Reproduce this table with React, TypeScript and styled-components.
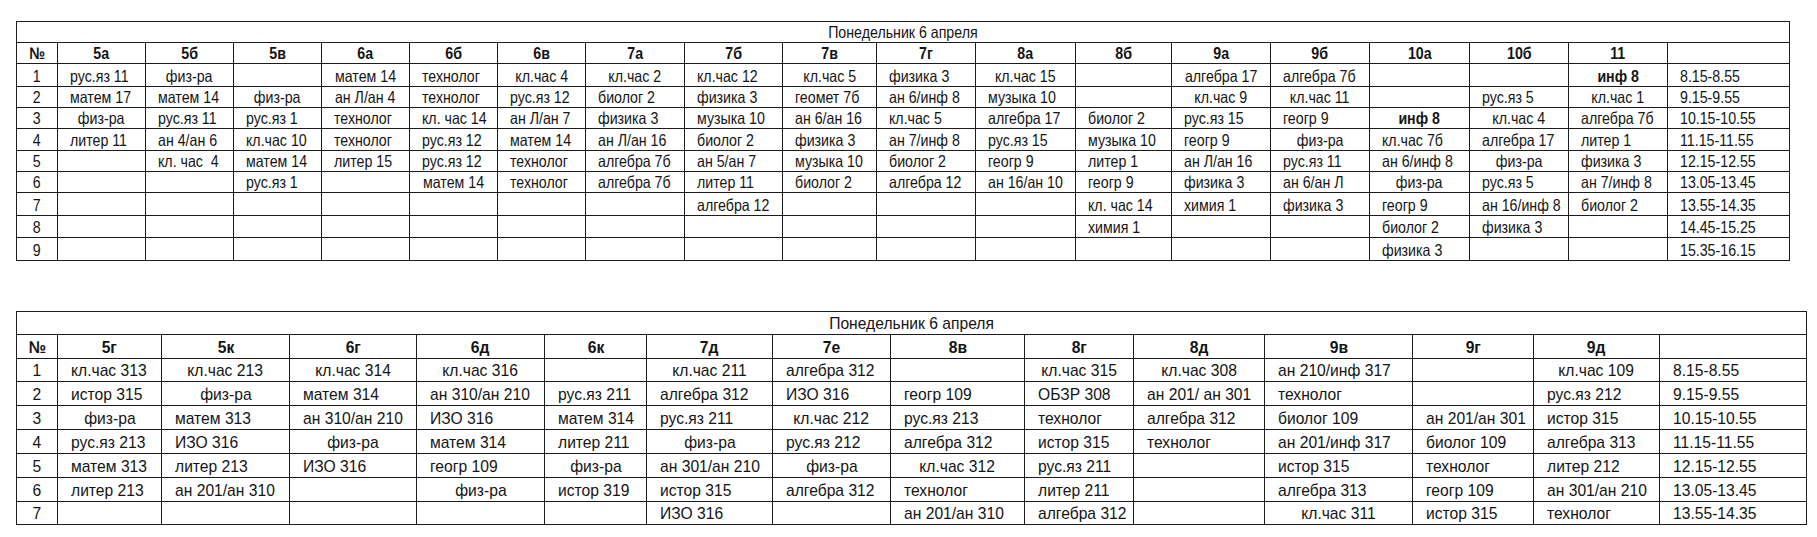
import React from 'react';
import styled, { createGlobalStyle } from 'styled-components';

type Align = 'l' | 'c';

interface SheetSpec {
  classes: string[];
  widths: number[];
  rows: string[][];
  rowHeights: number[];
  titleH: number;
  headH: number;
  font: number;
  scale: number;
  pad: number;
}

const TITLE = 'Понедельник 6 апреля';

const upper: SheetSpec = {
  classes: ['5а', '5б', '5в', '6а', '6б', '6в', '7а', '7б', '7в', '7г', '8а', '8б', '9а', '9б', '10а', '10б', '11'],
  widths: [41, 88, 88, 88, 88, 88, 88, 99, 98, 94, 99, 100, 96, 99, 99, 100, 99, 99, 122],
  rowHeights: [23, 21, 21, 22, 21, 21, 23, 22, 23],
  titleH: 21,
  headH: 21,
  font: 16.5,
  scale: 0.86,
  pad: 12,
  rows: [
    ['l|рус.яз 11', 'c|физ-ра', '', 'c|матем 14', 'l|технолог', 'c|кл.час 4', 'c|кл.час 2', 'l|кл.час 12', 'c|кл.час 5', 'l|физика 3', 'c|кл.час 15', '', 'c|алгебра 17', 'l|алгебра 7б', '', '', 'b|инф 8', 'l|8.15-8.55'],
    ['l|матем 17', 'l|матем 14', 'c|физ-ра', 'c|ан Л/ан 4', 'l|технолог', 'l|рус.яз 12', 'l|биолог 2', 'l|физика 3', 'l|геомет 7б', 'l|ан 6/инф 8', 'l|музыка 10', '', 'c|кл.час 9', 'c|кл.час 11', '', 'l|рус.яз 5', 'c|кл.час 1', 'l|9.15-9.55'],
    ['c|физ-ра', 'l|рус.яз 11', 'l|рус.яз 1', 'l|технолог', 'l|кл. час 14', 'l|ан Л/ан 7', 'l|физика 3', 'l|музыка 10', 'l|ан 6/ан 16', 'l|кл.час 5', 'l|алгебра 17', 'l|биолог 2', 'l|рус.яз 15', 'l|геогр 9', 'b|инф 8', 'c|кл.час 4', 'l|алгебра 7б', 'l|10.15-10.55'],
    ['l|литер 11', 'l|ан 4/ан 6', 'l|кл.час 10', 'l|технолог', 'l|рус.яз 12', 'l|матем 14', 'l|ан Л/ан 16', 'l|биолог 2', 'l|физика 3', 'l|ан 7/инф 8', 'l|рус.яз 15', 'l|музыка 10', 'l|геогр 9', 'c|физ-ра', 'l|кл.час 7б', 'l|алгебра 17', 'l|литер 1', 'l|11.15-11.55'],
    ['', 'l|кл. час  4', 'l|матем 14', 'l|литер 15', 'l|рус.яз 12', 'l|технолог', 'l|алгебра 7б', 'l|ан 5/ан 7', 'l|музыка 10', 'l|биолог 2', 'l|геогр 9', 'l|литер 1', 'l|ан Л/ан 16', 'l|рус.яз 11', 'l|ан 6/инф 8', 'c|физ-ра', 'l|физика 3', 'l|12.15-12.55'],
    ['', '', 'l|рус.яз 1', '', 'c|матем 14', 'l|технолог', 'l|алгебра 7б', 'l|литер 11', 'l|биолог 2', 'l|алгебра 12', 'l|ан 16/ан 10', 'l|геогр 9', 'l|физика 3', 'l|ан 6/ан Л', 'c|физ-ра', 'l|рус.яз 5', 'l|ан 7/инф 8', 'l|13.05-13.45'],
    ['', '', '', '', '', '', '', 'l|алгебра 12', '', '', '', 'l|кл. час 14', 'l|химия 1', 'l|физика 3', 'l|геогр 9', 'l|ан 16/инф 8', 'l|биолог 2', 'l|13.55-14.35'],
    ['', '', '', '', '', '', '', '', '', '', '', 'l|химия 1', '', '', 'l|биолог 2', 'l|физика 3', '', 'l|14.45-15.25'],
    ['', '', '', '', '', '', '', '', '', '', '', '', '', '', 'l|физика 3', '', '', 'l|15.35-16.15'],
  ],
};

const lower: SheetSpec = {
  classes: ['5г', '5к', '6г', '6д', '6к', '7д', '7е', '8в', '8г', '8д', '9в', '9г', '9д'],
  widths: [41, 104, 128, 127, 128, 102, 126, 118, 134, 109, 131, 148, 121, 126, 147],
  rowHeights: [23, 24, 24, 24, 24, 24, 23],
  titleH: 23,
  headH: 24,
  font: 17,
  scale: 0.92,
  pad: 13,
  rows: [
    ['l|кл.час 313', 'c|кл.час 213', 'c|кл.час 314', 'c|кл.час 316', '', 'c|кл.час 211', 'l|алгебра 312', '', 'c|кл.час 315', 'c|кл.час 308', 'l|ан 210/инф 317', '', 'c|кл.час 109', 'l|8.15-8.55'],
    ['l|истор 315', 'c|физ-ра', 'l|матем 314', 'l|ан 310/ан 210', 'l|рус.яз 211', 'l|алгебра 312', 'l|ИЗО 316', 'l|геогр 109', 'l|ОБЗР 308', 'l|ан 201/ ан 301', 'l|технолог', '', 'l|рус.яз 212', 'l|9.15-9.55'],
    ['c|физ-ра', 'l|матем 313', 'l|ан 310/ан 210', 'l|ИЗО 316', 'l|матем 314', 'l|рус.яз 211', 'c|кл.час 212', 'l|рус.яз 213', 'l|технолог', 'l|алгебра 312', 'l|биолог 109', 'l|ан 201/ан 301', 'l|истор 315', 'l|10.15-10.55'],
    ['l|рус.яз 213', 'l|ИЗО 316', 'c|физ-ра', 'l|матем 314', 'l|литер 211', 'c|физ-ра', 'l|рус.яз 212', 'l|алгебра 312', 'l|истор 315', 'l|технолог', 'l|ан 201/инф 317', 'l|биолог 109', 'l|алгебра 313', 'l|11.15-11.55'],
    ['l|матем 313', 'l|литер 213', 'l|ИЗО 316', 'l|геогр 109', 'c|физ-ра', 'l|ан 301/ан 210', 'c|физ-ра', 'c|кл.час 312', 'l|рус.яз 211', '', 'l|истор 315', 'l|технолог', 'l|литер 212', 'l|12.15-12.55'],
    ['l|литер 213', 'l|ан 201/ан 310', '', 'c|физ-ра', 'l|истор 319', 'l|истор 315', 'l|алгебра 312', 'l|технолог', 'l|литер 211', '', 'l|алгебра 313', 'l|геогр 109', 'l|ан 301/ан 210', 'l|13.05-13.45'],
    ['', '', '', '', '', 'l|ИЗО 316', '', 'l|ан 201/ан 310', 'l|алгебра 312', '', 'c|кл.час 311', 'l|истор 315', 'l|технолог', 'l|13.55-14.35'],
  ],
};

const GlobalStyle = createGlobalStyle`
  html, body {
    margin: 0;
    padding: 0;
    background: #ffffff;
  }
  body {
    font-family: "Liberation Sans", Arial, sans-serif;
    color: #141414;
  }
`;

const Page = styled.main`
  display: flex;
  flex-direction: column;
  align-items: flex-start;
  gap: 50px;
  padding: 21px 0 0 16px;
`;

const Sheet = styled.table<{ $font: number; $width: number }>`
  border-collapse: collapse;
  table-layout: fixed;
  width: ${p => p.$width}px;
  font-size: ${p => p.$font}px;
  line-height: 18px;
`;

const Col = styled.col<{ $w: number }>`
  width: ${p => p.$w}px;
`;

const Row = styled.tr<{ $h: number }>`
  height: ${p => p.$h}px;
`;

const Cell = styled.td`
  border: 1px solid #1c1c1c;
  padding: 0 0 1px;
  vertical-align: bottom;
  overflow: visible;
`;

const Content = styled.div<{ $align: Align; $pad: number }>`
  display: flex;
  justify-content: ${p => (p.$align === 'c' ? 'center' : 'flex-start')};
  padding-left: ${p => (p.$align === 'l' ? p.$pad : 0)}px;
  white-space: pre;
`;

const Label = styled.span<{ $scale: number; $align: Align; $bold?: boolean }>`
  display: inline-block;
  flex: none;
  transform: scaleX(${p => p.$scale});
  transform-origin: ${p => (p.$align === 'c' ? 'center' : 'left')} bottom;
  font-weight: ${p => (p.$bold ? 700 : 400)};
`;

function Text({ spec, text, align, bold }: { spec: SheetSpec; text: string; align: Align; bold?: boolean }) {
  return (
    <Content $align={align} $pad={spec.pad}>
      <Label $scale={spec.scale} $align={align} $bold={bold}>
        {text}
      </Label>
    </Content>
  );
}

function Entry({ spec, value }: { spec: SheetSpec; value: string }) {
  if (!value) return <Cell />;
  const [kind, text] = value.split('|');
  const align: Align = kind === 'l' ? 'l' : 'c';
  return (
    <Cell>
      <Text spec={spec} text={text} align={align} bold={kind === 'b'} />
    </Cell>
  );
}

function Timetable({ spec }: { spec: SheetSpec }) {
  const total = spec.widths.reduce((a, b) => a + b, 0);
  return (
    <Sheet $font={spec.font} $width={total}>
      <colgroup>
        {spec.widths.map((w, i) => (
          <Col key={i} $w={w} />
        ))}
      </colgroup>
      <tbody>
        <Row $h={spec.titleH}>
          <Cell colSpan={spec.widths.length}>
            <Text spec={spec} text={TITLE} align="c" />
          </Cell>
        </Row>
        <Row $h={spec.headH}>
          <Cell>
            <Text spec={spec} text="№" align="c" bold />
          </Cell>
          {spec.classes.map(c => (
            <Cell key={c}>
              <Text spec={spec} text={c} align="c" bold />
            </Cell>
          ))}
          <Cell />
        </Row>
        {spec.rows.map((row, r) => (
          <Row key={r} $h={spec.rowHeights[r]}>
            <Cell>
              <Text spec={spec} text={String(r + 1)} align="c" />
            </Cell>
            {row.map((v, i) => (
              <Entry key={i} spec={spec} value={v} />
            ))}
          </Row>
        ))}
      </tbody>
    </Sheet>
  );
}

export default function App() {
  return (
    <>
      <GlobalStyle />
      <Page>
        <Timetable spec={upper} />
        <Timetable spec={lower} />
      </Page>
    </>
  );
}
